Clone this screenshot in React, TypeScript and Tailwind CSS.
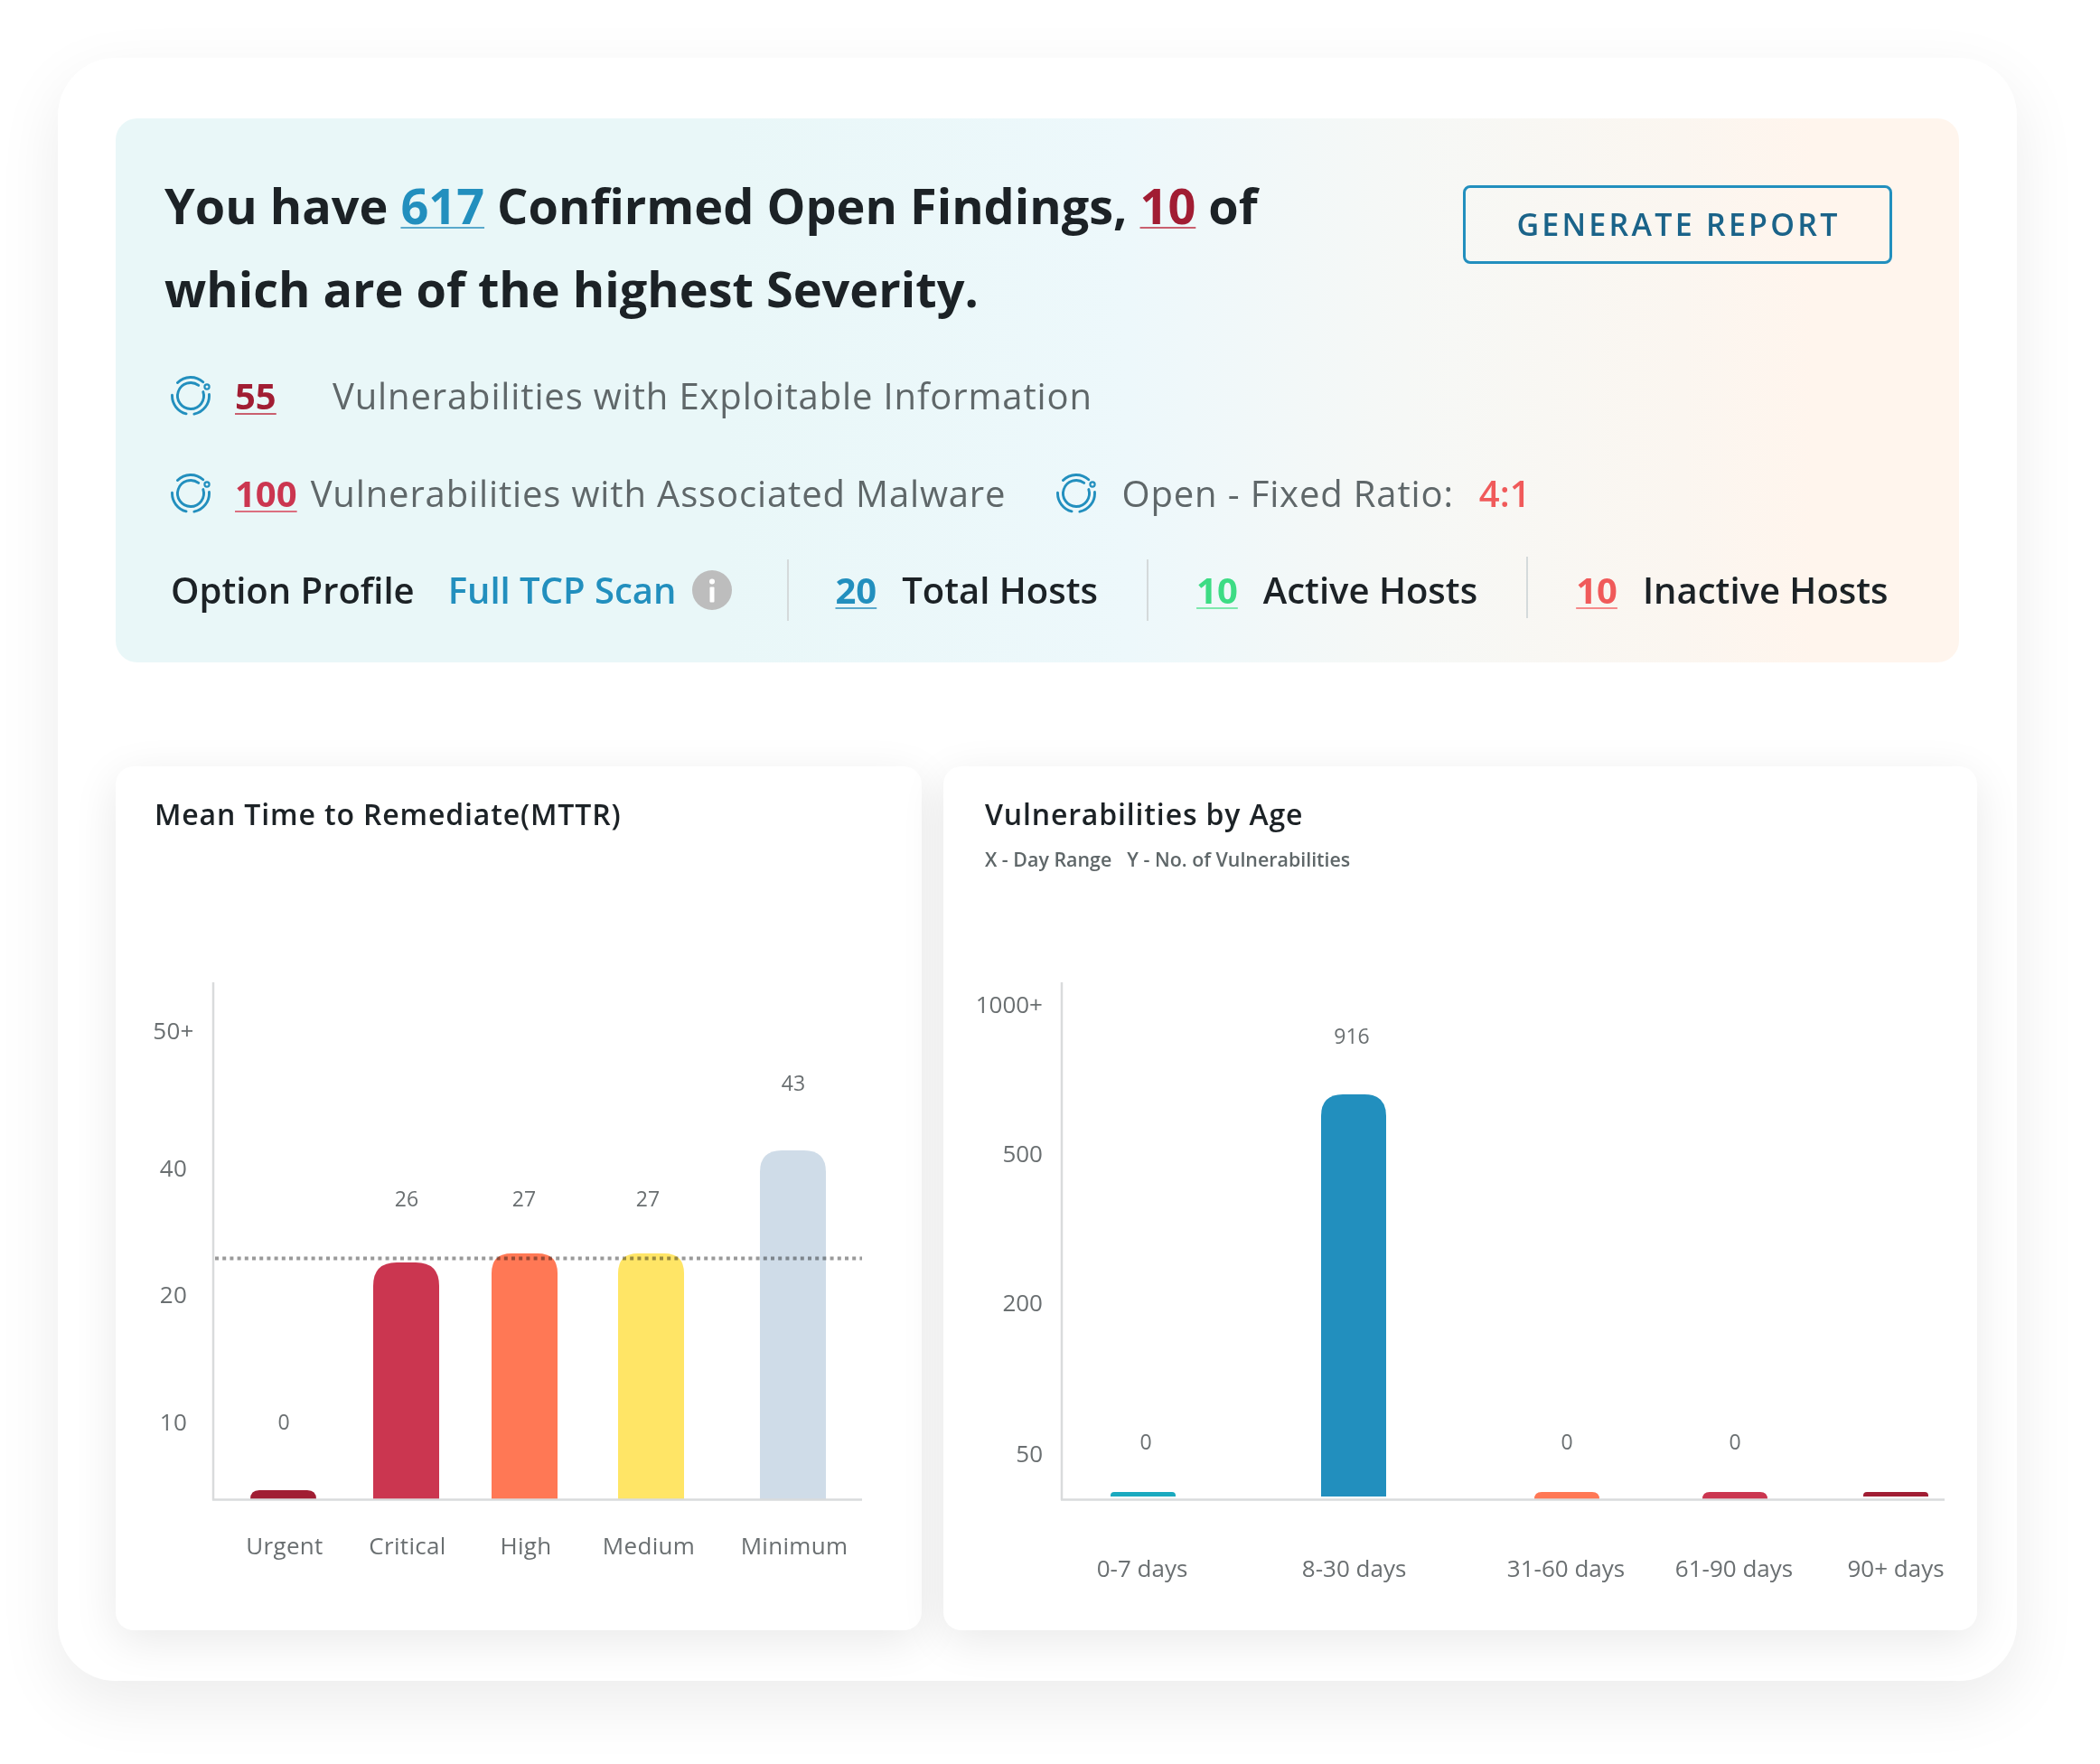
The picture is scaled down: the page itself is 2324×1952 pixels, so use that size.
import React from "react";

const polar = (r: number, deg: number) => {
  const a = ((deg - 90) * Math.PI) / 180;
  return [22 + r * Math.cos(a), 22 + r * Math.sin(a)];
};
const arc = (r: number, from: number, to: number) => {
  const [x0, y0] = polar(r, from);
  const [x1, y1] = polar(r, to);
  const large = to - from > 180 ? 1 : 0;
  return `M${x0.toFixed(2)} ${y0.toFixed(2)}A${r} ${r} 0 ${large} 1 ${x1.toFixed(2)} ${y1.toFixed(2)}`;
};

function RingIcon() {
  return (
    <svg width="44" height="44" viewBox="0 0 44 44" fill="none" stroke="#228fbe" strokeLinecap="round" className="shrink-0">
      <g strokeWidth="2.9">
        <path d={arc(20.5, -45, 42)} />
        <path d={arc(20.5, 86, 169)} />
        <path d={arc(20.5, 194, 272)} />
        <path d={arc(14.5, 72, 397)} />
      </g>
      <circle cx="40" cy="12" r="2.6" strokeWidth="2.2" />
    </svg>
  );
}

function InfoIcon() {
  return (
    <svg width="44" height="44" viewBox="0 0 44 44" className="shrink-0">
      <circle cx="22" cy="22" r="22" fill="#bdbdbd" />
      <circle cx="22" cy="12.5" r="3" fill="#fff" />
      <rect x="19.5" y="18.5" width="5" height="17" rx="1" fill="#fff" />
    </svg>
  );
}

function topRounded(x: number, w: number, top: number, bottom: number, r: number) {
  const rr = Math.min(r, bottom - top);
  return `M${x} ${bottom}V${top + rr}Q${x} ${top} ${x + rr} ${top}H${x + w - rr}Q${x + w} ${top} ${x + w} ${top + rr}V${bottom}Z`;
}

const lbl = "fill-[#6a6f71] text-[26px] tracking-[0.3px]";
const day = "fill-[#6a6f71] text-[26px]";
const val = "fill-[#6a6f71] text-[23px]";

function Txt({ x, y, c, a = "middle", children }: { x: number; y: number; c: string; a?: "middle" | "end"; children: React.ReactNode }) {
  return (
    <text x={x} y={y} className={c} textAnchor={a} dominantBaseline="central">
      {children}
    </text>
  );
}

function MttrChart() {
  const bars = [
    { x: 277, top: 1649, fill: "#a11d33", r: 10 },
    { x: 413, top: 1397, fill: "#cb3650", r: 26 },
    { x: 544, top: 1387, fill: "#ff7855", r: 22 },
    { x: 684, top: 1387, fill: "#ffe566", r: 22 },
    { x: 841, top: 1273, fill: "#cfdce8", r: 24 },
  ];
  return (
    <svg width="892" height="804" viewBox="128 1000 892 804" className="block">
      {bars.map((b) => (
        <path key={b.x} d={topRounded(b.x, 73, b.top, 1659, b.r)} fill={b.fill} />
      ))}
      <line x1="236" y1="1087" x2="236" y2="1660" stroke="#d9dbdc" strokeWidth="2.5" />
      <line x1="235" y1="1659.5" x2="954" y2="1659.5" stroke="#d9dbdc" strokeWidth="2.5" />
      <line x1="238" y1="1392.5" x2="954" y2="1392.5" stroke="#9a9a9a" strokeWidth="4" strokeDasharray="4 4.2" className="mix-blend-multiply" />
      <Txt x={192} y={1140} c={lbl}>50+</Txt>
      <Txt x={192} y={1292} c={lbl}>40</Txt>
      <Txt x={192} y={1432} c={lbl}>20</Txt>
      <Txt x={192} y={1573} c={lbl}>10</Txt>
      <Txt x={314} y={1573} c={val}>0</Txt>
      <Txt x={450} y={1326} c={val}>26</Txt>
      <Txt x={580} y={1326} c={val}>27</Txt>
      <Txt x={717} y={1326} c={val}>27</Txt>
      <Txt x={878} y={1198} c={val}>43</Txt>
      <Txt x={315} y={1709.5} c={lbl}>Urgent</Txt>
      <Txt x={451} y={1709.5} c={lbl}>Critical</Txt>
      <Txt x={582} y={1709.5} c={lbl}>High</Txt>
      <Txt x={718} y={1709.5} c={lbl}>Medium</Txt>
      <Txt x={879} y={1709.5} c={lbl}>Minimum</Txt>
    </svg>
  );
}

function AgeChart() {
  const bars = [
    { x: 1229, top: 1651, bottom: 1656, fill: "#1aa9bf", r: 4 },
    { x: 1462, top: 1211, bottom: 1656, fill: "#228fbe", r: 24 },
    { x: 1698, top: 1651, bottom: 1659, fill: "#ff7855", r: 8 },
    { x: 1884, top: 1651, bottom: 1659, fill: "#cb3650", r: 8 },
    { x: 2062, top: 1651, bottom: 1656, fill: "#a11d33", r: 4 },
  ];
  return (
    <svg width="1144" height="804" viewBox="1044 1000 1144 804" className="block">
      {bars.map((b) => (
        <path key={b.x} d={topRounded(b.x, 72, b.top, b.bottom, b.r)} fill={b.fill} />
      ))}
      <line x1="1175" y1="1087" x2="1175" y2="1660" stroke="#d9dbdc" strokeWidth="2.5" />
      <line x1="1174" y1="1659.5" x2="2152" y2="1659.5" stroke="#d9dbdc" strokeWidth="2.5" />
      <Txt x={1154} y={1110.5} c={day} a="end">1000+</Txt>
      <Txt x={1154} y={1276} c={day} a="end">500</Txt>
      <Txt x={1154} y={1441} c={day} a="end">200</Txt>
      <Txt x={1154} y={1607.5} c={day} a="end">50</Txt>
      <Txt x={1268} y={1595} c={val}>0</Txt>
      <Txt x={1496} y={1146} c={val}>916</Txt>
      <Txt x={1734} y={1595} c={val}>0</Txt>
      <Txt x={1920} y={1595} c={val}>0</Txt>
      <Txt x={1264} y={1734.5} c={day}>0-7 days</Txt>
      <Txt x={1498.6} y={1734.5} c={day}>8-30 days</Txt>
      <Txt x={1733} y={1734.5} c={day}>31-60 days</Txt>
      <Txt x={1919} y={1734.5} c={day}>61-90 days</Txt>
      <Txt x={2098} y={1734.5} c={day}>90+ days</Txt>
    </svg>
  );
}

function Divider({ className }: { className: string }) {
  return <span className={`w-[2px] bg-[#d4dadb] shrink-0 ${className}`} />;
}

export default function App() {
  return (
    <div className="w-[2324px] h-[1952px] bg-white pl-[64px] pt-[64px] font-['Open_Sans',sans-serif] overflow-hidden">
      <div className="w-[2168px] h-[1796px] rounded-[64px] bg-white pl-[64px] pt-[67px] shadow-[0_24px_70px_rgba(0,0,0,0.08)]">
        <section className="w-[2040px] h-[602px] rounded-[24px] bg-[linear-gradient(90deg,#e9f7f8_0%,#e9f7f8_33%,#edf8fb_55%,#f6f8f6_70%,#fbf6f0_85%,#fff5ed_92%,#fff5ed_100%)] flex flex-col">
          <div className="flex justify-between items-start pl-[54px] pr-[74px] pt-[50px]">
            <h1 className="text-[54px] leading-[92px] font-bold text-[#1c2226] whitespace-nowrap">
              You have{" "}
              <span className="text-[#228fbe] underline decoration-[2px] underline-offset-[3px] decoration-[#5aa9cc]">617</span>{" "}
              Confirmed Open Findings,{" "}
              <span className="text-[#a11d33] underline decoration-[2px] underline-offset-[3px] decoration-[#c9606f]">10</span> of
              <br />
              which are of the highest Severity.
            </h1>
            <button className="mt-[24px] w-[475px] h-[87px] pb-[1px] pl-[2px] rounded-[8px] border-[3px] border-[#228fbe] text-[#1a6389] text-[34px] font-semibold tracking-[0.095em]">
              GENERATE REPORT
            </button>
          </div>
          <div className="flex items-center pl-[61px] mt-[43px] h-[60px]">
            <RingIcon />
            <span className="ml-[27px] w-[108px] text-[40px] font-bold text-[#a11d33] underline decoration-[2px] underline-offset-[4px] decoration-[#c9606f]">55</span>
            <span className="text-[40px] tracking-[0.0215em] text-[#5f6769]">Vulnerabilities with Exploitable Information</span>
          </div>
          <div className="flex items-center pl-[61px] mt-[48px] h-[60px]">
            <RingIcon />
            <span className="ml-[27px] text-[40px] font-bold text-[#cb3650] underline decoration-[2px] underline-offset-[4px] decoration-[#dc6f80]">100</span>
            <span className="ml-[15px] text-[40px] tracking-[0.0215em] text-[#5f6769]">Vulnerabilities with Associated Malware</span>
            <span className="ml-[56px]"><RingIcon /></span>
            <span className="ml-[28px] text-[40px] tracking-[0.0215em] text-[#5f6769]">Open - Fixed Ratio:</span>
            <span className="ml-[28px] text-[40px] font-semibold text-[#f05a5a]">4:1</span>
          </div>
          <div className="flex items-center pl-[61px] mt-[41px] h-[72px]">
            <span className="text-[40px] font-semibold text-[#1c2226]">Option Profile</span>
            <span className="ml-[37px] text-[40px] font-semibold text-[#228fbe]">Full TCP Scan</span>
            <span className="ml-[18px]"><InfoIcon /></span>
            <Divider className="ml-[61px] h-[68px]" />
            <span className="ml-[51px] text-[40px] font-bold text-[#228fbe] underline decoration-[2px] underline-offset-[4px] decoration-[#5aa9cc]">20</span>
            <span className="ml-[28px] text-[40px] font-semibold text-[#1c2226]">Total Hosts</span>
            <Divider className="ml-[54px] h-[68px]" />
            <span className="ml-[53px] text-[40px] font-bold text-[#3ddc84] underline decoration-[2px] underline-offset-[4px] decoration-[#7fe8ad]">10</span>
            <span className="ml-[28px] text-[40px] font-semibold text-[#1c2226]">Active Hosts</span>
            <Divider className="ml-[54px] h-[68px] -mt-[6px]" />
            <span className="ml-[53px] text-[40px] font-bold text-[#f05a5a] underline decoration-[2px] underline-offset-[4px] decoration-[#f58a8a]">10</span>
            <span className="ml-[28px] text-[40px] font-semibold text-[#1c2226]">Inactive Hosts</span>
          </div>
        </section>

        <div className="flex gap-[24px] mt-[115px]">
          <section className="w-[892px] h-[956px] rounded-[20px] bg-white shadow-[0_12px_50px_rgba(0,0,0,0.09)]">
            <div className="h-[152px] pl-[43px] pt-[31px]">
              <h2 className="text-[32px] leading-[44px] font-semibold tracking-[0.85px] text-[#1c2226]">Mean Time to Remediate(MTTR)</h2>
            </div>
            <MttrChart />
          </section>
          <section className="w-[1144px] h-[956px] rounded-[20px] bg-white shadow-[0_12px_50px_rgba(0,0,0,0.09)]">
            <div className="h-[152px] pl-[46px] pt-[31px]">
              <h2 className="text-[32px] leading-[44px] font-semibold tracking-[0.85px] text-[#1c2226]">Vulnerabilities by Age</h2>
              <p className="mt-[13px] text-[21.4px] leading-[30px] font-semibold text-[#5f6769] flex gap-[17px]">
                <span>X - Day Range</span>
                <span>Y - No. of Vulnerabilities</span>
              </p>
            </div>
            <AgeChart />
          </section>
        </div>
      </div>
    </div>
  );
}
